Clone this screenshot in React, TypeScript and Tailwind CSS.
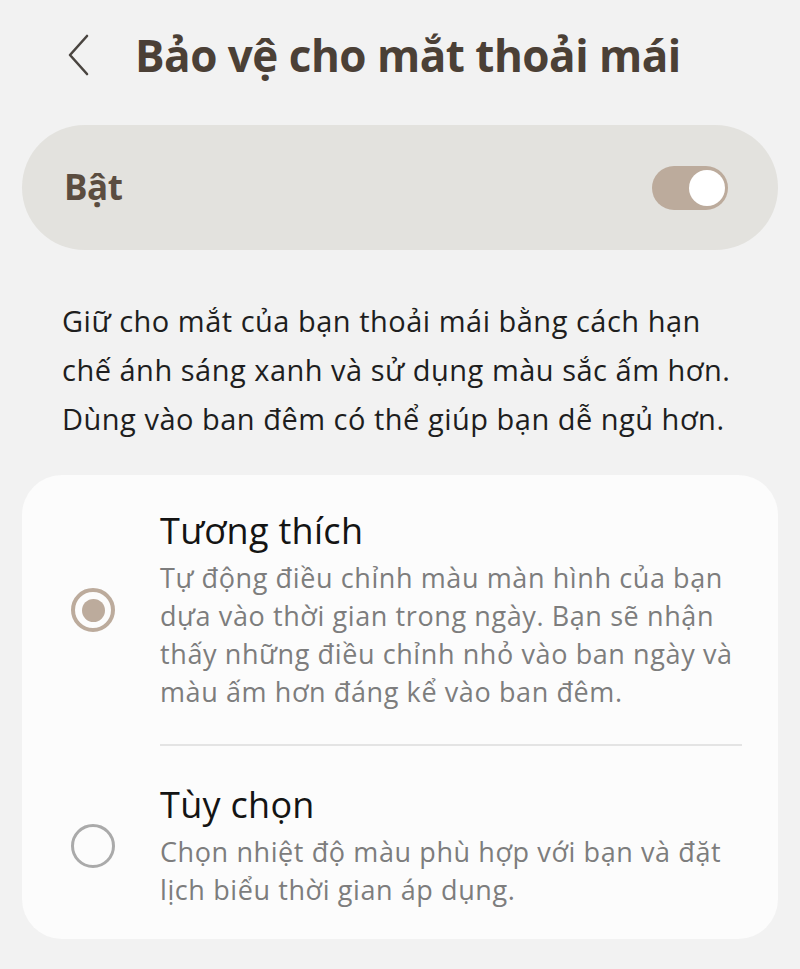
const FONT = "font-['Open_Sans','Noto_Sans',sans-serif]";

function Radio({ checked }: { checked: boolean }) {
  return checked ? (
    <span className="flex h-[44px] w-[44px] shrink-0 items-center justify-center rounded-full border-[4px] border-[#bcab9c]">
      <span className="h-[23px] w-[23px] rounded-full bg-[#bcab9c]" />
    </span>
  ) : (
    <span className="h-[44px] w-[44px] shrink-0 rounded-full border-[3px] border-[#aaaaaa]" />
  );
}

function Option({ title, lines, checked }: { title: string; lines: string[]; checked: boolean }) {
  return (
    <div className="flex items-center pl-[49px]">
      <Radio checked={checked} />
      <div className="ml-[45px] flex-1">
        <div className="text-[36px] leading-[44px] tracking-[0.3px] text-[#141414]">{title}</div>
        <p className="mt-[6px] text-[27px] leading-[38px] tracking-[0.6px] text-[#7d7d7d]">
          {lines.map((l, i) => (
            <span key={i} className="block whitespace-nowrap">{l}</span>
          ))}
        </p>
      </div>
    </div>
  );
}

export default function App() {
  return (
    <div className={`${FONT} min-h-[969px] w-[800px] bg-[#f2f2f2] pt-[27px] pb-8`}>
      {/* header */}
      <div className="flex h-[56px] items-center pl-[66px]">
        <svg width="24" height="42" viewBox="0 0 24 42" className="shrink-0">
          <path d="M21 2 L4 21 L21 40" fill="none" stroke="#4a4540" strokeWidth="2.6" strokeLinecap="round" strokeLinejoin="round" />
        </svg>
        <h1 className="ml-[45px] text-[44px] font-bold leading-none tracking-[-0.5px] text-[#4b4036]">
          Bảo vệ cho mắt thoải mái
        </h1>
      </div>

      {/* master switch */}
      <div className="mx-[22px] mt-[42px] flex h-[125px] items-center justify-between rounded-full bg-[#e3e2de] pl-[42px] pr-[50px]">
        <span className="text-[35px] font-bold tracking-[-0.5px] text-[#5b4d40]">Bật</span>
        <span className="flex h-[44px] w-[76px] items-center justify-end rounded-full bg-[#bcab9c] px-[3px]">
          <span className="h-[36px] w-[36px] rounded-full bg-white" />
        </span>
      </div>

      <p className="mt-[46px] px-[62px] text-[29px] leading-[49px] tracking-[0.5px] text-[#1e1e1e]">
        <span className="block whitespace-nowrap">Giữ cho mắt của bạn thoải mái bằng cách hạn</span>
        <span className="block whitespace-nowrap">chế ánh sáng xanh và sử dụng màu sắc ấm hơn.</span>
        <span className="block whitespace-nowrap">Dùng vào ban đêm có thể giúp bạn dễ ngủ hơn.</span>
      </p>

      {/* options card */}
      <div className="mx-[22px] mt-[32px] rounded-[40px] bg-[#fcfcfc] pb-[30px] pt-[34px]">
        <Option
          checked
          title="Tương thích"
          lines={[
            "Tự động điều chỉnh màu màn hình của bạn",
            "dựa vào thời gian trong ngày. Bạn sẽ nhận",
            "thấy những điều chỉnh nhỏ vào ban ngày và",
            "màu ấm hơn đáng kể vào ban đêm.",
          ]}
        />
        <div className="ml-[138px] mr-[36px] mt-[33px] h-[2px] bg-[#e4e4e4]" />
        <div className="mt-[37px]">
          <Option
            checked={false}
            title="Tùy chọn"
            lines={["Chọn nhiệt độ màu phù hợp với bạn và đặt", "lịch biểu thời gian áp dụng."]}
          />
        </div>
      </div>
    </div>
  );
}
